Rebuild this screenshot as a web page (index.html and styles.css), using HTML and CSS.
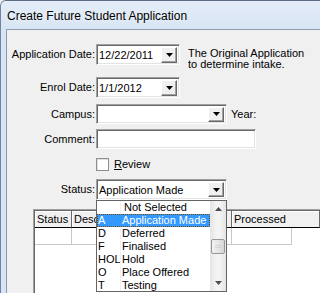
FILE: index.html
```html
<!DOCTYPE html>
<html>
<head>
<meta charset="utf-8">
<title>Create Future Student Application</title>
<link rel="stylesheet" href="styles.css">
</head>
<body>
<div class="window">
  <div class="titlebar"><span class="title">Create Future Student Application</span></div>
  <div class="frame">
    <div class="client">
      <div class="row row-first">
        <span class="lbl">Application Date:</span>
        <div class="combo combo-date"><span class="val">12/22/2011</span><span class="btn"><svg width="7" height="4" viewBox="0 0 7 4"><polygon points="0,0 7,0 3.5,4"/></svg></span></div>
        <div class="note">The Original Application<br>to determine intake.</div>
      </div>
      <div class="row row-enrol">
        <span class="lbl">Enrol Date:</span>
        <div class="combo combo-date"><span class="val">1/1/2012</span><span class="btn"><svg width="7" height="4" viewBox="0 0 7 4"><polygon points="0,0 7,0 3.5,4"/></svg></span></div>
      </div>
      <div class="row row-campus">
        <span class="lbl lbl-short">Campus:</span>
        <div class="combo combo-wide combo-short"><span class="val"></span><span class="btn"><svg width="7" height="4" viewBox="0 0 7 4"><polygon points="0,0 7,0 3.5,4"/></svg></span></div>
        <span class="side">Year:</span>
      </div>
      <div class="row row-comment">
        <span class="lbl lbl-short">Comment:</span>
        <div class="textbox"></div>
      </div>
      <div class="row row-review">
        <span class="lbl lbl-check"></span>
        <span class="checkbox"></span>
        <span class="check-label"><u>R</u>eview</span>
      </div>
      <div class="row row-status">
        <span class="lbl">Status:</span>
        <div class="combo combo-wide"><span class="val">Application Made</span><span class="btn"><svg width="7" height="4" viewBox="0 0 7 4"><polygon points="0,0 7,0 3.5,4"/></svg></span>
          <div class="dropdown">
            <div class="items">
              <div class="item"><span class="code"></span><span class="desc desc-none">Not Selected</span></div>
              <div class="item item-sel"><span class="code">A</span><span class="desc">Application Made</span></div>
              <div class="item"><span class="code">D</span><span class="desc">Deferred</span></div>
              <div class="item"><span class="code">F</span><span class="desc">Finalised</span></div>
              <div class="item"><span class="code">HOL</span><span class="desc">Hold</span></div>
              <div class="item"><span class="code">O</span><span class="desc">Place Offered</span></div>
              <div class="item"><span class="code">T</span><span class="desc">Testing</span></div>
            </div>
            <div class="scrollbar">
              <div class="sb-btn"><svg width="7" height="4" viewBox="0 0 7 4"><polygon points="0,4 7,4 3.5,0"/></svg></div>
              <div class="sb-track"><div class="sb-thumb"><span class="grip"></span></div></div>
              <div class="sb-btn"><svg width="7" height="4" viewBox="0 0 7 4"><polygon points="0,0 7,0 3.5,4"/></svg></div>
            </div>
          </div>
        </div>
      </div>
      <div class="grid">
        <div class="grid-head">
          <div class="hcell hc-status">Status</div>
          <div class="hcell hc-desc">Description</div>
          <div class="hcell hc-p">Processed</div>
        </div>
        <div class="grid-row">
          <div class="gcell hc-status"></div>
          <div class="gcell hc-desc"></div>
          <div class="gcell hc-p"></div>
        </div>
      </div>
    </div>
  </div>
</div>
</body>
</html>
```

FILE: styles.css
```css
html, body {
  margin: 0;
  padding: 0;
}
html {
  background: #f0f0f0;
}
body {
  height: 293px;
  overflow: hidden;
  font: 11px "Liberation Sans", Arial, sans-serif;
  color: #000;
}
.window {
  width: 100%;
  height: 293px;
  box-sizing: border-box;
  display: flex;
  flex-direction: column;
  background: #c3d9f0;
  border-top: 1px solid #5b6c82;
  border-left: 1px solid #6f849e;
  border-top-left-radius: 6px;
  overflow: hidden;
}
.titlebar {
  height: 28px;
  flex: none;
  display: flex;
  align-items: center;
  padding-left: 6px;
  padding-top: 1px;
  box-sizing: border-box;
  background: linear-gradient(#e4edf8, #d7e5f4);
}
.title {
  font: 12px "Liberation Sans", Arial, sans-serif;
  white-space: nowrap;
  text-shadow: 0 0 6px #fff;
}
.frame {
  flex: 1;
  display: flex;
  padding-left: 5px;
  background: linear-gradient(90deg, #d6e6f6, #bdd6ef);
  min-height: 0;
}
.client {
  flex: 1;
  display: flex;
  flex-direction: column;
  background: #f0f0f0;
  border-top: 1px solid #8d9cae;
  border-left: 1px solid #8d9cae;
  min-width: 0;
}
.row {
  display: flex;
  align-items: flex-start;
  flex: none;
}
.row-first { margin-top: 14px; }
.row-enrol { margin-top: 7px; }
.row-campus { margin-top: 6px; }
.row-comment { margin-top: 5px; }
.row-review { margin-top: 9px; }
.row-status { margin-top: 8px; }
.lbl {
  width: 89px;
  flex: none;
  box-sizing: border-box;
  padding-right: 1px;
  text-align: right;
  line-height: 21px;
  white-space: nowrap;
}
.lbl-short { line-height: 20px; }
.lbl-check { line-height: 13px; }
.combo {
  position: relative;
  box-sizing: border-box;
  height: 21px;
  flex: none;
  display: flex;
  align-items: center;
  background: #fff;
  border: 1px solid;
  border-color: #a0a0a0 #fff #fff #a0a0a0;
  box-shadow: inset 1px 1px 0 #696969, inset -1px -1px 0 #e3e3e3;
}
.combo-date { width: 84px; }
.combo-wide { width: 131px; }
.combo-short { height: 20px; }
.val {
  flex: 1;
  padding-left: 2px;
  white-space: nowrap;
  overflow: hidden;
}
.btn {
  width: 16px;
  height: 15px;
  margin-right: 2px;
  box-sizing: border-box;
  display: flex;
  align-items: center;
  justify-content: center;
  background: #f0f0f0;
  border: 1px solid;
  border-color: #fff #696969 #696969 #fff;
  box-shadow: inset -1px -1px 0 #a0a0a0;
}
.combo-date .btn { height: 16px; }
.btn svg, .sb-btn svg {
  display: block;
}
.btn polygon { fill: #000; }
.note {
  margin-left: 8px;
  margin-top: 4px;
  line-height: 11px;
  white-space: nowrap;
}
.side {
  margin-left: 4px;
  line-height: 20px;
  white-space: nowrap;
}
.textbox {
  width: 160px;
  height: 20px;
  flex: none;
  box-sizing: border-box;
  background: #fff;
  border: 1px solid;
  border-color: #a0a0a0 #fff #fff #a0a0a0;
  box-shadow: inset 1px 1px 0 #696969, inset -1px -1px 0 #e3e3e3;
}
.checkbox {
  width: 13px;
  height: 13px;
  box-sizing: border-box;
  flex: none;
  background: #fff;
  border: 1px solid #8f8f8f;
  box-shadow: inset 1px 1px 0 #e0e0e0;
}
.check-label {
  margin-left: 5px;
  line-height: 13px;
  white-space: nowrap;
}
.check-label u {
  text-decoration: underline;
  text-underline-offset: 1px;
}
.dropdown {
  position: absolute;
  left: -1px;
  top: 20px;
  width: 131px;
  height: 92px;
  box-sizing: border-box;
  display: flex;
  background: #fff;
  border: 1px solid #646464;
  z-index: 5;
  overflow: hidden;
}
.items {
  flex: 1;
  display: flex;
  flex-direction: column;
  min-width: 0;
}
.item {
  display: flex;
  height: 13px;
  line-height: 13px;
  flex: none;
  box-sizing: border-box;
  white-space: nowrap;
}
.code {
  width: 24px;
  flex: none;
  padding-left: 1px;
  box-sizing: border-box;
  border-right: 1px solid #f0f0f0;
  overflow: hidden;
}
.desc {
  padding-left: 1px;
}
.desc-none {
  padding-left: 3px;
}
.item-sel {
  background: #3399ff;
  color: #fff;
  outline: 1px dotted #7a4a10;
  outline-offset: -1px;
}
.item-sel .code { border-right-color: #3399ff; }
.scrollbar {
  width: 16px;
  flex: none;
  display: flex;
  flex-direction: column;
  background: linear-gradient(90deg, #e4e4e4, #f4f4f4 40%, #f4f4f4 60%, #e4e4e4);
}
.sb-btn {
  height: 16px;
  flex: none;
  display: flex;
  align-items: center;
  justify-content: center;
}
.sb-btn polygon { fill: #4d4d4d; }
.sb-track {
  flex: 1;
  display: flex;
  flex-direction: column;
  padding-top: 22px;
}
.sb-thumb {
  height: 15px;
  margin: 0 1px;
  box-sizing: border-box;
  border: 1px solid #979797;
  border-radius: 2px;
  background: linear-gradient(90deg, #f2f2f2, #e6e6e6 50%, #d6d6d6);
  display: flex;
  align-items: center;
  justify-content: center;
}
.grip {
  width: 6px;
  height: 5px;
  background: repeating-linear-gradient(#e9e9e9 0 1px, #9a9a9a 1px 2px);
  opacity: 0.25;
}
.grid {
  margin-top: 9px;
  margin-left: 26px;
  flex: 1;
  display: flex;
  flex-direction: column;
  background: #fff;
  border-top: 1px solid #a0a0a0;
  border-left: 1px solid #a0a0a0;
  box-shadow: inset 1px 1px 0 #696969;
  padding-top: 1px;
  padding-left: 1px;
  min-width: 0;
  overflow: hidden;
}
.grid-head, .grid-row {
  display: flex;
  flex: none;
}
.hcell {
  height: 17px;
  line-height: 16px;
  box-sizing: border-box;
  background: #f0f0f0;
  border-right: 1px solid #696969;
  border-bottom: 1px solid #000;
  box-shadow: inset 1px 1px 0 #fff;
  padding-left: 2px;
  white-space: nowrap;
  overflow: hidden;
  flex: none;
}
.hc-status { width: 37px; }
.hc-desc { width: 160px; }
.hc-p { flex: 1; min-width: 60px; }
.gcell {
  height: 17px;
  box-sizing: border-box;
  border-right: 1px solid #c8c8c8;
  border-bottom: 1px solid #c8c8c8;
  flex: none;
}
```
